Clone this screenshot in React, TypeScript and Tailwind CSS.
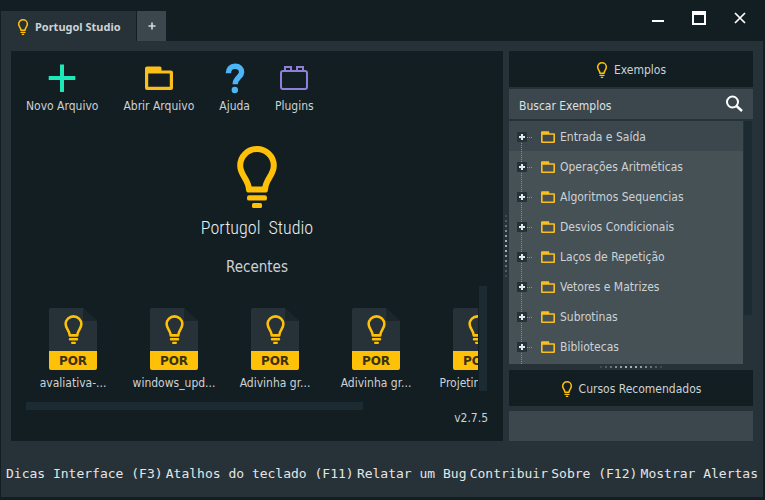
import React from "react";

function Bulb({ className, stroke = 6 }: { className: string; stroke?: number }) {
  return (
    <svg viewBox="0 0 40 62" className={className} aria-hidden="true" fill="#ffc107">
      <path
        d="M12 43.5 C11.5 33 3.2 29.5 3.2 19.5 A16.8 16.5 0 0 1 36.8 19.5 C36.8 29.5 28.5 33 28 43.5 Z"
        fill="none"
        stroke="#ffc107"
        strokeWidth={stroke}
        strokeLinejoin="round"
      />
      <rect x="10" y="49.2" width="20" height="5.4" rx="2.2" />
      <rect x="15" y="57" width="10" height="5" rx="1.5" />
    </svg>
  );
}

function Folder({ className }: { className: string }) {
  return (
    <svg viewBox="0 0 28 24" className={className} aria-hidden="true" preserveAspectRatio="none">
      <path
        d="M2 0.5 Q0 0.5 0 2.5 V22 Q0 24 2 24 H26 Q28 24 28 22 V6.5 Q28 4.5 26 4.5 H16.5 V2 Q16.5 0.5 15 0.5 Z M3.2 7.5 H24.8 V20.8 H3.2 Z"
        fill="#fbbf1b"
        fillRule="evenodd"
      />
    </svg>
  );
}

function PlusIcon() {
  return (
    <svg viewBox="0 0 28 28" className="size-7" aria-hidden="true">
      <path d="M14 0.5 V28 M0.7 14 H27.3" stroke="#1de9b6" strokeWidth="4" />
    </svg>
  );
}

function HelpIcon() {
  return (
    <svg viewBox="0 0 28 28" className="size-7 overflow-visible" aria-hidden="true">
      <path
        d="M7.4 9.3 C7.4 4.8 10 2.2 14 2.2 C18.4 2.2 20.6 4.8 20.6 8.2 C20.6 13 14.2 13.6 14.2 20.3"
        fill="none"
        stroke="#4db5f5"
        strokeWidth="5.4"
      />
      <circle cx="13.8" cy="26" r="3.2" fill="#4db5f5" />
    </svg>
  );
}

function PluginIcon() {
  return (
    <svg viewBox="0 0 28 28" className="size-7" aria-hidden="true" fill="none" stroke="#8f7fd8" strokeWidth="2">
      <rect x="1" y="7" width="26" height="18" rx="2" />
      <path d="M5 7 V3 H11 V7 M17 7 V3 H23 V7" />
    </svg>
  );
}

const actions = [
  { label: "Novo Arquivo", icon: <PlusIcon /> },
  { label: "Abrir Arquivo", icon: <Folder className="my-0.5 h-6 w-7" /> },
  { label: "Ajuda", icon: <HelpIcon /> },
  { label: "Plugins", icon: <PluginIcon /> },
];

const recents = ["avaliativa-...", "windows_upd...", "Adivinha gr...", "Adivinha gr...", "Projetinho d..."];

const examples = [
  "Entrada e Saída",
  "Operações Aritméticas",
  "Algoritmos Sequencias",
  "Desvios Condicionais",
  "Laços de Repetição",
  "Vetores e Matrizes",
  "Subrotinas",
  "Bibliotecas",
];

const footerActions = [
  "Dicas Interface (F3)",
  "Atalhos do teclado (F11)",
  "Relatar um Bug",
  "Contribuir",
  "Sobre (F12)",
  "Mostrar Alertas",
];

const gripOpacity = [0.2, 0.35, 0.5, 0.7, 0.85, 1, 1, 1, 0.85, 0.7, 0.5, 0.35, 0.2];

function Grip({ vertical = false }: { vertical?: boolean }) {
  return (
    <div
      className={
        vertical
          ? "flex w-1.5 shrink-0 flex-col items-center justify-center gap-[3px]"
          : "flex h-1.5 shrink-0 items-center justify-center gap-[3px]"
      }
    >
      {gripOpacity.map((opacity, i) => (
        <span key={i} className="size-0.5 bg-[#a9b1b5]" style={{ opacity }} />
      ))}
    </div>
  );
}

function PorFile({ name }: { name: string }) {
  return (
    <button className="flex w-[90px] shrink-0 flex-col items-center gap-[5px]">
      <span className="flex h-[62px] w-12 flex-col">
        <span className="relative flex flex-1 items-center justify-center">
          <svg viewBox="0 0 48 43" className="absolute inset-0 h-[43px] w-12" aria-hidden="true">
            <path d="M2 0 H34 L48 13 V43 H0 V2 Q0 0 2 0 Z" fill="#263238" />
            <path d="M34 0 V11 Q34 13 36 13 H48 Z" fill="#1b262c" />
          </svg>
          <Bulb className="relative h-[29px] w-[19px]" stroke={5.5} />
        </span>
        <span className="flex h-[19px] items-center justify-center rounded-b-xs bg-[#ffc107] font-['DejaVu_Sans',sans-serif] text-xs font-bold text-[#3a3210]">
          POR
        </span>
      </span>
      <span className="leading-4">{name}</span>
    </button>
  );
}

function SectionHeader({ title }: { title: string }) {
  return (
    <h2 className="flex h-9 shrink-0 items-center justify-center gap-1.5 bg-[#131e23] pt-0.5">
      <Bulb className="h-4 w-3" stroke={6} />
      {title}
    </h2>
  );
}

export default function App() {
  return (
    <div className="flex h-screen min-h-[500px] flex-col overflow-hidden bg-[#131e23] pr-0.5 pb-[3px] pl-px font-['DejaVu_Sans_Condensed','DejaVu_Sans',sans-serif] text-xs text-[#cdd2d4]">
      <header className="flex h-[41px] shrink-0 items-end justify-between">
        <div className="flex gap-px">
          <button className="flex h-[30px] w-[135px] items-center gap-1.5 bg-[#263238] pt-0.5 pl-4 font-['Noto_Sans',sans-serif] text-[11px] font-bold">
            <Bulb className="h-4 w-3" stroke={6} />
            Portugol Studio
          </button>
          <button aria-label="Nova aba" className="flex h-[30px] w-[29px] items-center justify-center bg-[#3c474d]">
            <svg viewBox="0 0 8 8" className="size-2" aria-hidden="true">
              <path d="M4 0.5 V7.5 M0.5 4 H7.5" stroke="#d5d9db" strokeWidth="1.6" />
            </svg>
          </button>
        </div>
        <div className="flex h-9 items-start gap-7 pr-[17px]">
          <button aria-label="Minimizar" className="flex h-[26px] w-3 items-center">
            <svg viewBox="0 0 12 14" className="h-3.5 w-3" aria-hidden="true">
              <path d="M0 10 H12" stroke="#fff" strokeWidth="2" />
            </svg>
          </button>
          <button aria-label="Maximizar" className="flex h-[26px] w-3.5 items-center">
            <svg viewBox="0 0 14 14" className="size-3.5" aria-hidden="true">
              <path d="M0 0 H14 V14 H0 Z M2 4 V12 H12 V4 Z" fill="#fff" fillRule="evenodd" />
            </svg>
          </button>
          <button aria-label="Fechar" className="flex h-[26px] w-3 items-center">
            <svg viewBox="0 0 12 12" className="size-3" aria-hidden="true">
              <path d="M1 1 L11 11 M11 1 L1 11" stroke="#fff" strokeWidth="1.7" />
            </svg>
          </button>
        </div>
      </header>

      <div className="flex min-h-0 flex-1 flex-col bg-[#263238]">
        <div className="flex min-h-0 flex-1 px-2.5 pt-2.5">
          <main className="flex min-w-0 flex-1 flex-col bg-[#131e23] px-[15px] pt-[13px]">
            <nav className="flex gap-[25px]">
              {actions.map(({ label, icon }) => (
                <button key={label} className="flex flex-col items-center gap-1.5">
                  {icon}
                  <span className="leading-4">{label}</span>
                </button>
              ))}
            </nav>

            <div className="mt-8 flex flex-col items-center">
              <Bulb className="h-[62px] w-10" />
              <h1 className="mt-2 font-['Roboto_Condensed','Roboto',sans-serif] text-lg leading-6 font-light whitespace-pre text-[#eceff1]">
                Portugol  Studio
              </h1>
              <h2 className="mt-[15px] text-[15px] leading-6">Recentes</h2>
            </div>

            <div className="mt-[7px] flex">
              <div className="flex h-[105px] min-w-0 flex-1 gap-[11px] overflow-hidden pt-[22px] pl-0.5">
                {recents.map((name, i) => (
                  <PorFile key={i} name={name} />
                ))}
              </div>
              <div className="mx-px h-[105px] w-2 bg-[#1c2a31]" />
            </div>
            <div className="mt-[11px] h-2 w-[73%] bg-[#1c2a31]" />
            <p className="text-right leading-4">v2.7.5</p>
          </main>

          <Grip vertical />

          <aside className="flex w-[244px] shrink-0 flex-col">
            <SectionHeader title="Exemplos" />
            <label className="mt-0.5 flex h-[30px] shrink-0 items-center bg-[#3c474d] px-2.5">
              <input
                aria-label="Buscar Exemplos"
                placeholder="Buscar Exemplos"
                className="min-w-0 flex-1 bg-transparent pt-1 outline-none placeholder:text-[#dde1e3]"
              />
              <svg viewBox="0 0 18 18" className="size-[18px]" aria-hidden="true" fill="none" stroke="#fff">
                <circle cx="7.5" cy="7" r="5.5" strokeWidth="2" />
                <path d="M11.5 11 L17 16" strokeWidth="2.4" />
              </svg>
            </label>
            <div className="mt-0.5 flex min-h-0 flex-1">
              <div className="relative flex-1 overflow-hidden bg-[#465156]">
                <span className="absolute top-5 bottom-0 left-3 border-l border-dotted border-[#879095]" />
                <ul>
                  {examples.map((title, i) => (
                    <li key={title} className={i === 0 ? "bg-[#3c474d]" : ""}>
                      <button className="flex h-[30px] w-full items-center pt-0.5 pl-2">
                        <svg viewBox="0 0 10 10" className="relative size-2.5" aria-hidden="true">
                          <rect width="10" height="10" fill="#263238" />
                          <path d="M5 2 V8 M2 5 H8" stroke="#e3e7e9" strokeWidth="2" />
                        </svg>
                        <span className="mr-[9px] w-[5px] border-t border-dotted border-[#879095]" />
                        <Folder className="mr-[5px] h-3 w-3.5" />
                        {title}
                      </button>
                    </li>
                  ))}
                </ul>
              </div>
              <div className="w-2.5 pl-px">
                <div className="h-4/5 w-2 bg-[#1c2a31]" />
              </div>
            </div>
            <Grip />
            <SectionHeader title="Cursos Recomendados" />
            <div className="mt-[5px] h-[30px] shrink-0 bg-[#3c474d]" />
          </aside>
        </div>

        <footer className="flex h-14 shrink-0 items-center justify-between px-[5px] pt-2.5 font-['DejaVu_Sans_Mono',monospace] text-[13px] text-[#e3e6e7]">
          {footerActions.map((label) => (
            <button key={label} className="whitespace-nowrap">
              {label}
            </button>
          ))}
        </footer>
      </div>
    </div>
  );
}
